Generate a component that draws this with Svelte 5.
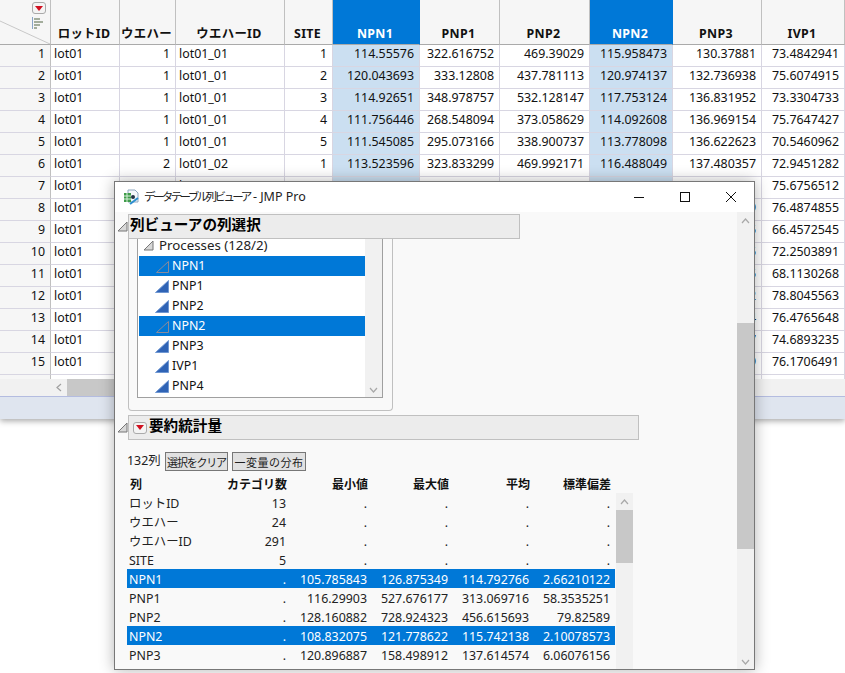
<script>
  const cols = [
    { k: 'ロットID', c: 'hd' }, { k: 'ウエハー', c: 'hd' }, { k: 'ウエハーID', c: 'hd' }, { k: 'SITE', c: 'hd' },
    { k: 'NPN1', c: 'hd sel' }, { k: 'PNP1', c: 'hd' }, { k: 'PNP2', c: 'hd' }, { k: 'NPN2', c: 'hd sel' }, { k: 'PNP3', c: 'hd' }, { k: 'IVP1', c: 'hd' }
  ];
  const rows = [
    ['lot01',1,'lot01_01',1,'114.55576','322.616752','469.39029','115.958473','130.37881','73.4842941'],
    ['lot01',1,'lot01_01',2,'120.043693','333.12808','437.781113','120.974137','132.736938','75.6074915'],
    ['lot01',1,'lot01_01',3,'114.92651','348.978757','532.128147','117.753124','136.831952','73.3304733'],
    ['lot01',1,'lot01_01',4,'111.756446','268.548094','373.058629','114.092608','136.969154','75.7647427'],
    ['lot01',1,'lot01_01',5,'111.545085','295.073166','338.900737','113.778098','136.622623','70.5460962'],
    ['lot01',2,'lot01_02',1,'113.523596','323.833299','469.992171','116.488049','137.480357','72.9451282'],
    ['lot01',2,'lot01_02',2,'116.548292','326.331491','548.334128','117.523896','138.504911','75.6756512'],
    ['lot01',2,'lot01_02',3,'114.62','330.1','470.2','116.2','136.109','76.4874855'],
    ['lot01',2,'lot01_02',4,'113.84','320.5','460.7','115.9','135.445','66.4572545'],
    ['lot01',2,'lot01_02',5,'112.97','315.2','455.1','114.8','137.215','72.2503891'],
    ['lot01',3,'lot01_03',1,'115.31','318.9','462.4','116.7','136.375','68.1130268'],
    ['lot01',3,'lot01_03',2,'114.28','322.7','467.9','115.6','138.012','78.8045563'],
    ['lot01',3,'lot01_03',3,'113.45','311.3','451.6','114.3','137.884','76.4765648'],
    ['lot01',3,'lot01_03',4,'116.02','325.8','472.5','117.1','136.247','74.6893235'],
    ['lot01',3,'lot01_03',5,'115.67','319.4','464.8','116.4','137.609','76.1706491']
  ];
  const listItems = [
    { n: 'NPN1', s: true }, { n: 'PNP1' }, { n: 'PNP2' }, { n: 'NPN2', s: true }, { n: 'PNP3' }, { n: 'IVP1' }, { n: 'PNP4' }
  ];
  const heads = ['列', 'カテゴリ数', '最小値', '最大値', '平均', '標準偏差'];
  const stats = [
    ['ロットID','13','.','.','.','.'],
    ['ウエハー','24','.','.','.','.'],
    ['ウエハーID','291','.','.','.','.'],
    ['SITE','5','.','.','.','.'],
    ['NPN1','.','105.785843','126.875349','114.792766','2.66210122',true],
    ['PNP1','.','116.29903','527.676177','313.069716','58.3535251'],
    ['PNP2','.','128.160882','728.924323','456.615693','79.82589'],
    ['NPN2','.','108.832075','121.778622','115.742138','2.10078573',true],
    ['PNP3','.','120.896887','158.498912','137.614574','6.06076156']
  ];
</script>

{#snippet tri()}
  <svg class="tri" width="11" height="11" viewBox="0 0 11 11"><path d="M1 10 L10 1 V10 Z" fill="#d8d8d8" stroke="#777" stroke-width="1"/></svg>
{/snippet}
{#snippet redbtn()}
  <span class="redbtn"><svg width="8" height="5" viewBox="0 0 8 5"><path d="M0 0H8L4 5Z" fill="#d01020"/></svg></span>
{/snippet}
{#snippet cont(sel)}
  <svg class="cont" width="15" height="13" viewBox="0 0 15 13">
    {#if sel}
      <path d="M1.5 12.5 L13.5 1.5 V12.5 Z" fill="none" stroke="#8a8a9a" stroke-width="1"/>
    {:else}
      <path d="M0.5 12.5 L13.5 0.5 V12.5 Z" fill="#2f63b5" stroke="#6f97d2" stroke-width="1"/>
    {/if}
  </svg>
{/snippet}

<div class="page">
  <div class="sheet">
    <div class="table">
      <div class="corner">
        <svg class="diag" width="50" height="44"><line x1="0" y1="21" x2="50" y2="44" stroke="#c8c8c8"/></svg>
        <span class="corner-tools">
          {@render redbtn()}
          <svg width="12" height="12" viewBox="0 0 12 12"><path d="M0.5 0V12" stroke="#8aa4c8"/><path d="M2 1H8V3H2ZM2 4H11V6H2ZM2 7H8V9H2ZM2 10H5V12H2Z" fill="#a3ad9c"/></svg>
        </span>
      </div>
      {#each cols as h}<div class={h.c}>{h.k}</div>{/each}
      {#each rows as r, i}
        <div class="rn">{i + 1}</div>
        {#each r as v, j}
          <div class="td" class:left={j === 0 || j === 2} class:hi={j === 4 || j === 7}>{v}</div>
        {/each}
      {/each}
      <div class="rn clip"></div>
      {#each cols as _, j}
        <div class="td clip" class:hi={j === 4 || j === 7}></div>
      {/each}
    </div>
    <div class="hscroll">
      <span class="hleft"><svg width="6" height="9" viewBox="0 0 6 9"><path d="M5 1L1 4.5L5 8" fill="none" stroke="#a0a0a0" stroke-width="1.2"/></svg></span>
      <span class="hthumb"></span>
    </div>
    <div class="status"></div>
  </div>

  <div class="win">
    <div class="titlebar">
      <svg class="appicon" width="16" height="16" viewBox="0 0 16 16">
        <path d="M5 1H12L15 4V13H5Z" fill="#f4f7fb" stroke="#8fa8c0"/>
        <rect x="1" y="4" width="7" height="9" fill="#3f9b4a"/>
        <path d="M1 7H8M1 10H8M4 4V13" stroke="#d7efd9" stroke-width="1"/>
        <circle cx="10" cy="8" r="2" fill="#234"/>
        <path d="M7 15L15 9" stroke="#2d8fd0" stroke-width="2"/>
      </svg>
      <span class="title"><span class="jp">データテーブル列ビューア</span> - JMP Pro</span>
      <span class="winbtns">
        <svg width="46" height="30" viewBox="0 0 46 30"><path d="M18 15.5H28" stroke="#111"/></svg>
        <svg width="46" height="30" viewBox="0 0 46 30"><rect x="18.5" y="10.5" width="9" height="9" fill="none" stroke="#111"/></svg>
        <svg width="46" height="30" viewBox="0 0 46 30"><path d="M18 10L28 20M28 10L18 20" stroke="#111"/></svg>
      </span>
    </div>
    <div class="winbody">
      <div class="content">
        <div class="outline top">
          {@render tri()}
          <div class="obar first"><span class="otitle">列ビューアの列選択</span></div>
        </div>
        <div class="panel">
          <div class="listbox">
            <div class="listitems">
              <div class="proc">{@render tri()}<span>Processes (128/2)</span></div>
              {#each listItems as it}
                <div class="li" class:on={it.s}>{@render cont(it.s)}<span>{it.n}</span></div>
              {/each}
            </div>
            <div class="vbar inner">
              <svg class="down" width="9" height="6" viewBox="0 0 9 6"><path d="M1 1L4.5 5L8 1" fill="none" stroke="#a8a8a8" stroke-width="1.2"/></svg>
            </div>
          </div>
        </div>

        <div class="outline second">
          {@render tri()}
          <div class="obar wide">{@render redbtn()}<span class="otitle">要約統計量</span></div>
        </div>

        <div class="tools">
          <span class="count">132列</span>
          <button class="b1">選択をクリア</button>
          <button class="b2">一変量の分布</button>
        </div>

        <div class="stathead">
          {#each heads as h, i}<span class:name={i === 0}>{h}</span>{/each}
        </div>
        <div class="statwrap">
          <div class="statrows">
            {#each stats as s}
              <div class="srow" class:on={s[6]}>
                <span class="name">{s[0]}</span><span>{s[1]}</span><span>{s[2]}</span><span>{s[3]}</span><span>{s[4]}</span><span>{s[5]}</span>
              </div>
            {/each}
          </div>
          <div class="sbar">
            <span class="up"><svg width="9" height="6" viewBox="0 0 9 6"><path d="M1 5L4.5 1L8 5" fill="none" stroke="#a8a8a8" stroke-width="1.2"/></svg></span>
            <span class="thumb"></span>
          </div>
        </div>
      </div>
      <div class="mainbar">
        <span class="up"><svg width="9" height="6" viewBox="0 0 9 6"><path d="M1 5L4.5 1L8 5" fill="none" stroke="#a8a8a8" stroke-width="1.2"/></svg></span>
        <span class="thumb"></span>
        <span class="dn"><svg width="9" height="6" viewBox="0 0 9 6"><path d="M1 1L4.5 5L8 1" fill="none" stroke="#a8a8a8" stroke-width="1.2"/></svg></span>
      </div>
    </div>
  </div>
</div>

<style>
  :global(body) { margin: 0; background: #fff; }
  .page {
    position: relative; width: 845px; height: 673px; overflow: hidden; background: #fff; color: #111;
    font-family: "Noto Sans", "Noto Sans CJK JP", sans-serif; font-size: 12.4px;
  }
  .sheet { height: 419px; display: flex; flex-direction: column; box-shadow: 0 2px 6px rgba(0,0,0,.35); background: #fff; }
  .table {
    display: grid; height: 379px; overflow: hidden;
    grid-template-columns: 51px 69px 56px 109px 48px 87px 80px 90px 83px 89px 83px;
    grid-template-rows: 45px repeat(16, 22px);
  }
  .corner { position: relative; background: #f6f6f6; border-right: 1px solid #c0c0c0; border-bottom: 1px solid #aaa; }
  .diag { position: absolute; left: 0; top: 0; }
  .corner-tools { position: absolute; left: 32px; top: 2px; display: flex; flex-direction: column; gap: 3px; align-items: flex-start; }
  .hd {
    background: #f6f6f6; border-right: 1px solid #c0c0c0; border-bottom: 1px solid #aaa; box-sizing: border-box;
    display: flex; align-items: flex-end; justify-content: center; padding: 0 2px 2px 0; font-weight: 700; font-size: 12.4px; letter-spacing: .3px; color: #111; white-space: nowrap;
  }
  .hd.sel { background: #0078d7; color: #fff; border-right-color: #0078d7; }
  .rn {
    background: #f6f6f6; border-right: 1px solid #c0c0c0; border-bottom: 1px solid #d8d6e2; box-sizing: border-box;
    text-align: right; padding: 0 5px 0 0; line-height: 18px;
  }
  .td {
    border-right: 1px solid #d8d6e2; border-bottom: 1px solid #d8d6e2; box-sizing: border-box;
    text-align: right; padding-right: 5px; line-height: 18px; white-space: nowrap; overflow: hidden;
  }
  .td.left { text-align: left; padding: 0 0 0 3px; }
  .td.hi { background: #cbdff1; }
  .hscroll { height: 17px; background: #f1f1f1; display: flex; padding-left: 51px; }
  .hleft { width: 16px; display: flex; align-items: center; justify-content: center; }
  .hthumb { width: 300px; background: #c8c8c8; }
  .status { flex: 1; background: #dfe5ef; border-top: 1px solid #b4bce0; }

  .win {
    position: absolute; left: 114px; top: 181px; width: 641px; height: 489px; box-sizing: border-box;
    border: 1px solid #777; background: #f9f9f9; display: flex; flex-direction: column;
    box-shadow: 0 0 14px rgba(0,0,0,.3);
  }
  .titlebar { height: 30px; flex: none; background: #fff; display: flex; align-items: center; padding-left: 8px; }
  .appicon { margin-right: 5px; }
  .title { font-size: 12.5px; line-height: 30px; height: 30px; color: #222; flex: 1; white-space: nowrap; }
  .jp { font-size: 11.5px; letter-spacing: -2.6px; }
  .winbtns { display: flex; }
  .winbody { flex: 1; display: flex; min-height: 0; }
  .content { flex: 1; min-width: 0; position: relative; overflow: hidden; }

  .outline { display: flex; align-items: center; }
  .outline.top { margin: 2px 0 0 2px; }
  .outline.second { margin: 4px 0 0 2px; }
  .tri { flex: none; }
  .obar {
    height: 25px; box-sizing: border-box; background: #ececec; border: 1px solid #c0c0c0; display: flex; align-items: center; padding-left: 1px;
  }
  .obar.first { width: 392px; }
  .obar.wide { width: 511px; padding-left: 4px; gap: 2px; }
  .otitle { font-weight: 700; font-size: 14.6px; line-height: 20px; height: 20px; margin-top: -5px; color: #000; white-space: nowrap; }

  .panel {
    margin-left: 13px; width: 265px; height: 172px; box-sizing: border-box; border: 1px solid #c0c0c0; border-top: 0; border-radius: 0 0 4px 4px; padding: 0 9px 13px 8px;
  }
  .listbox { height: 158px; border: 1px solid #a0a0a0; border-top: 0; background: #fff; display: flex; padding-left: 1px; }
  .listitems { width: 226px; }
  .vbar.inner { flex: 1; background: #f1f1f1; position: relative; }
  .down { position: absolute; left: 4px; bottom: 4px; }
  .proc { height: 17px; display: flex; align-items: flex-start; gap: 5px; padding-left: 4px; color: #222; font-size: 13.3px; line-height: 13px; }
  .proc span { margin-top: 0; }
  .proc :global(svg) { margin-top: 1px; }
  .li { height: 20px; display: flex; align-items: center; gap: 2px; padding-left: 16px; color: #111; }
  .li span { margin-top: -1px; }
  .li.on { background: #0078d7; color: #fff; }

  .tools { display: flex; align-items: center; margin: 12px 0 0 12px; height: 19px; }
  .count { width: 38px; color: #222; margin-top: -3px; }
  button {
    font: inherit; height: 19px; padding: 0; box-sizing: border-box; background: #e1e1e1; border: 1px solid #777; color: #222; white-space: nowrap; overflow: hidden;
  }
  .b1 { width: 63px; font-size: 11px; letter-spacing: -1.2px; }
  .b2 { width: 74px; margin-left: 4px; font-size: 11px; letter-spacing: .5px; }

  .stathead, .srow {
    display: grid; grid-template-columns: 73px 86px 81px 81px 81px 81px; white-space: nowrap; text-align: right;
  }
  .stathead { margin: 2px 0 0 13px; width: 486px; height: 20px; line-height: 23px; font-weight: 700; font-size: 12px; color: #111; }
  .name { text-align: left; padding-left: 2px; }
  .statwrap { display: flex; margin-left: 12px; height: 176px; }
  .statrows { width: 488px; }
  .srow { height: 19px; line-height: 22px; padding-right: 3px; color: #222; }
  .srow.on { background: #0078d7; color: #fff; }
  .sbar { width: 17px; margin-left: 1px; background: #f1f1f1; display: flex; flex-direction: column; }
  .up { height: 17px; display: flex; align-items: center; justify-content: center; flex: none; }
  .sbar .thumb { height: 53px; background: #c8c8c8; }
  .mainbar { width: 17px; flex: none; background: #f1f1f1; position: relative; display: flex; flex-direction: column; }
  .mainbar .thumb { height: 226px; margin-top: 94px; background: #c8c8c8; }
  .dn { position: absolute; bottom: 4px; left: 4px; display: flex; }
  .redbtn {
    display: inline-flex; align-items: center; justify-content: center; flex: none; width: 14px; height: 12px; box-sizing: border-box;
    background: #f4f4f4; border: 1px solid #aaa; border-radius: 3px;
  }
</style>
